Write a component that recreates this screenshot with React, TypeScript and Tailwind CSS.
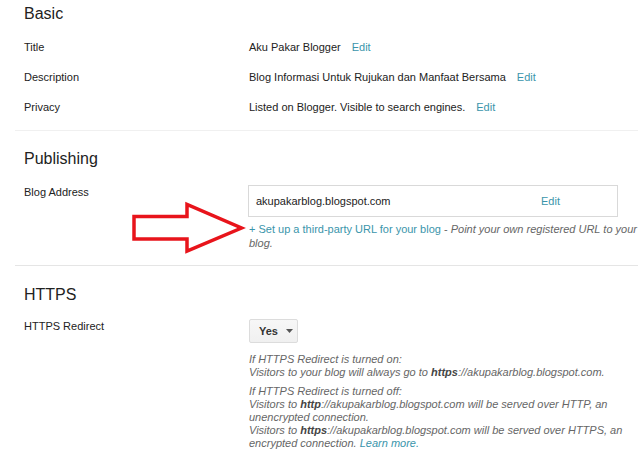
import React from "react"

const font = { fontFamily: '"Liberation Sans", Arial, sans-serif' }

function Row({ label, value }: { label: string; value: string }) {
  return (
    <div className="flex h-[30px] items-center text-[11px] leading-[14px]">
      <div className="w-[225px] text-[#222]">{label}</div>
      <div className="text-[#222]">
        {value}
        <a className="ml-[11px] text-[#3a95ab]">Edit</a>
      </div>
    </div>
  )
}

function RedArrow() {
  return (
    <svg
      className="pointer-events-none absolute left-[128px] top-[199px]"
      width="120"
      height="58"
      viewBox="128 199 120 58"
    >
      <polygon
        points="134,216.5 187,216.5 187,204.5 241.5,228 187,251 187,239 134,239"
        fill="#fff"
        stroke="#e8141b"
        strokeWidth="3.5"
        strokeLinejoin="miter"
      />
    </svg>
  )
}

export default function App() {
  return (
    <div className="relative w-[638px] h-[460px] overflow-hidden bg-white" style={font}>
      <div className="pl-[15px]">
        {/* Basic */}
        <section className="border-b border-[#f0f0f0] pl-[9px] pt-[4px] pb-[8px]">
          <h2 className="text-[16px] leading-[20px] text-[#222] mb-[8px]">Basic</h2>
          <Row label="Title" value="Aku Pakar Blogger" />
          <Row label="Description" value="Blog Informasi Untuk Rujukan dan Manfaat Bersama" />
          <Row label="Privacy" value="Listed on Blogger. Visible to search engines." />
        </section>

        {/* Publishing */}
        <section className="border-b border-[#e5e5e5] pl-[9px] pt-[18px] pb-[15px]">
          <h2 className="text-[16px] leading-[20px] text-[#222] mb-[16px]">Publishing</h2>
          <div className="flex text-[11px] leading-[14px]">
            <div className="w-[224px] text-[#222]">Blog Address</div>
            <div className="w-[370px]">
              <div className="flex h-[32px] items-center border border-[#d9d9d9] pl-[7px]">
                <span className="w-[285px] text-[#222]">akupakarblog.blogspot.com</span>
                <a className="text-[#3a95ab]">Edit</a>
              </div>
              <p className="mt-[5px] w-[390px] pl-[1px] text-[#666]">
                <a className="text-[#3a95ab]">+ Set up a third-party URL for your blog</a>
                <span> - </span>
                <i>Point your own registered URL to your blog.</i>
              </p>
            </div>
          </div>
        </section>

        {/* HTTPS */}
        <section className="pl-[9px] pt-[19px]">
          <h2 className="text-[16px] leading-[20px] text-[#222] mb-[14px]">HTTPS</h2>
          <div className="flex text-[11px] leading-[13px]">
            <div className="w-[225px] pt-[1px] text-[#222]">HTTPS Redirect</div>
            <div className="w-[380px]">
              <button className="flex h-[24px] w-[49px] items-center rounded-[2px] border border-[#dcdcdc] bg-gradient-to-b from-[#f7f7f7] to-[#f0f0f0] pl-[9px] text-[11px] font-bold text-[#333]">
                Yes
                <svg className="ml-[8px]" width="7" height="4" viewBox="0 0 7 4">
                  <polygon points="0,0 7,0 3.5,4" fill="#555" />
                </svg>
              </button>
              <div className="mt-[10px] italic text-[#666]">
                <p>If HTTPS Redirect is turned on:</p>
                <p>
                  Visitors to your blog will always go to <b className="text-[#444]">https</b>
                  ://akupakarblog.blogspot.com.
                </p>
                <p className="mt-[6px]">If HTTPS Redirect is turned off:</p>
                <p>
                  Visitors to <b className="text-[#444]">http</b>://akupakarblog.blogspot.com will be served over
                  HTTP, an unencrypted connection.
                </p>
                <p>
                  Visitors to <b className="text-[#444]">https</b>://akupakarblog.blogspot.com will be served over
                  HTTPS, an encrypted connection. <a className="text-[#3a95ab]">Learn more.</a>
                </p>
              </div>
            </div>
          </div>
        </section>
      </div>
      <RedArrow />
    </div>
  )
}
